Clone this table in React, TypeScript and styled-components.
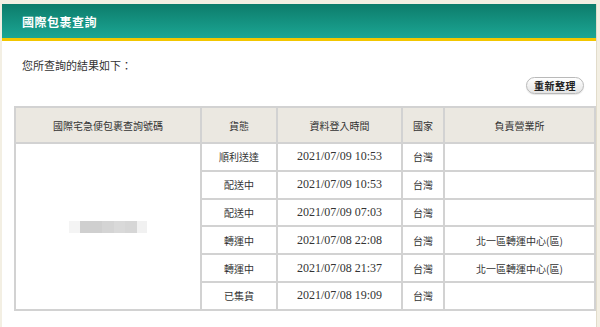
import React from "react";
import styled, { createGlobalStyle } from "styled-components";

const GlobalStyle = createGlobalStyle`
  html, body {
    margin: 0;
    padding: 0;
    background: #f3efe3;
    font-family: "Noto Sans CJK TC", "Liberation Sans", sans-serif;
  }
`;

const Page = styled.div`
  width: 600px;
  height: 327px;
  overflow: hidden;
  padding: 4px 4px 0 2px;
  box-sizing: border-box;
`;

const Panel = styled.div`
  background: #fff;
  height: 100%;
  box-shadow: 1px 0 0 #e2dccb;
`;

const PanelHeader = styled.div`
  height: 34px;
  display: flex;
  align-items: center;
  padding-left: 20px;
  background: linear-gradient(#0d7c6b, #1ba694);
  border-bottom: 3px solid #f2c600;
  color: #fff;
  font-size: 12px;
  font-weight: bold;
  letter-spacing: 0.5px;
`;

const Body = styled.div`
  padding: 16px 12px 0 12px;
`;

const Intro = styled.div`
  padding-left: 8px;
  font-size: 11px;
  color: #333;
  height: 16px;
  line-height: 16px;
`;

const ActionRow = styled.div`
  display: flex;
  justify-content: flex-end;
  margin-top: 4px;
  margin-bottom: 12px;
`;

const ReloadButton = styled.button`
  width: 58px;
  height: 17px;
  padding: 0;
  border: 1px solid #b9b9b9;
  border-radius: 9px;
  background: linear-gradient(#ffffff, #e4e4e4);
  box-shadow: 0 1px 1px rgba(0, 0, 0, 0.1);
  font-family: inherit;
  font-size: 10px;
  font-weight: bold;
  line-height: 15px;
  color: #222;
  letter-spacing: 0.5px;
`;

const Table = styled.table`
  width: 570px;
  border-collapse: collapse;
  table-layout: fixed;
  border: 2px solid #cfcfcf;
  font-size: 10px;
  color: #333;
`;

const HeadCell = styled.th<{ $w: number }>`
  width: ${(p) => p.$w}px;
  height: 34px;
  padding: 0;
  background: #ebe8e1;
  border: 2px solid #d2d2d2;
  font-weight: normal;
  text-align: center;
`;

const Cell = styled.td<{ $serif?: boolean }>`
  height: 25.8px;
  padding: 0;
  border: 2px solid #d2d2d2;
  text-align: center;
  font-family: ${(p) =>
    p.$serif ? `"Liberation Serif", "Noto Sans CJK TC", serif` : "inherit"};
  font-size: ${(p) => (p.$serif ? "12px" : "10px")};
`;

const IdCell = styled(Cell)`
  vertical-align: top;
  padding-top: 77px;
`;

const Masked = styled.span`
  display: inline-flex;
  height: 12px;
  vertical-align: top;
`;

const MaskBlock = styled.span<{ $w: number; $c: string }>`
  display: block;
  width: ${(p) => p.$w}px;
  height: 12px;
  background: ${(p) => p.$c};
`;

const columns = [
  { label: "國際宅急便包裹查詢號碼", w: 184 },
  { label: "貨態", w: 74 },
  { label: "資料登入時間", w: 123 },
  { label: "國家", w: 40 },
  { label: "負責營業所", w: 149 },
];

const rows = [
  { status: "順利送達", time: "2021/07/09 10:53", office: "" },
  { status: "配送中", time: "2021/07/09 10:53", office: "" },
  { status: "配送中", time: "2021/07/09 07:03", office: "" },
  { status: "轉運中", time: "2021/07/08 22:08", office: "北一區轉運中心(區)" },
  { status: "轉運中", time: "2021/07/08 21:37", office: "北一區轉運中心(區)" },
  { status: "已集貨", time: "2021/07/08 19:09", office: "" },
];

// pixelated tracking number
const mask = [
  { w: 11, c: "#f4f4f4" },
  { w: 22, c: "#cfcfcf" },
  { w: 12, c: "#d4d4d4" },
  { w: 11, c: "#d9d9d9" },
  { w: 12, c: "#d6d6d6" },
  { w: 10, c: "#f1f1f1" },
];

export default function App() {
  return (
    <>
      <GlobalStyle />
      <Page>
        <Panel>
          <PanelHeader>國際包裹查詢</PanelHeader>
          <Body>
            <Intro>您所查詢的結果如下：</Intro>
            <ActionRow>
              <ReloadButton>重新整理</ReloadButton>
            </ActionRow>
            <Table>
              <thead>
                <tr>
                  {columns.map((c) => (
                    <HeadCell key={c.label} $w={c.w}>
                      {c.label}
                    </HeadCell>
                  ))}
                </tr>
              </thead>
              <tbody>
                {rows.map((r, i) => (
                  <tr key={i}>
                    {i === 0 && (
                      <IdCell rowSpan={rows.length}>
                        <Masked>
                          {mask.map((m, j) => (
                            <MaskBlock key={j} $w={m.w} $c={m.c} />
                          ))}
                        </Masked>
                      </IdCell>
                    )}
                    <Cell>{r.status}</Cell>
                    <Cell $serif>{r.time}</Cell>
                    <Cell>台灣</Cell>
                    <Cell>{r.office}</Cell>
                  </tr>
                ))}
              </tbody>
            </Table>
          </Body>
        </Panel>
      </Page>
    </>
  );
}
